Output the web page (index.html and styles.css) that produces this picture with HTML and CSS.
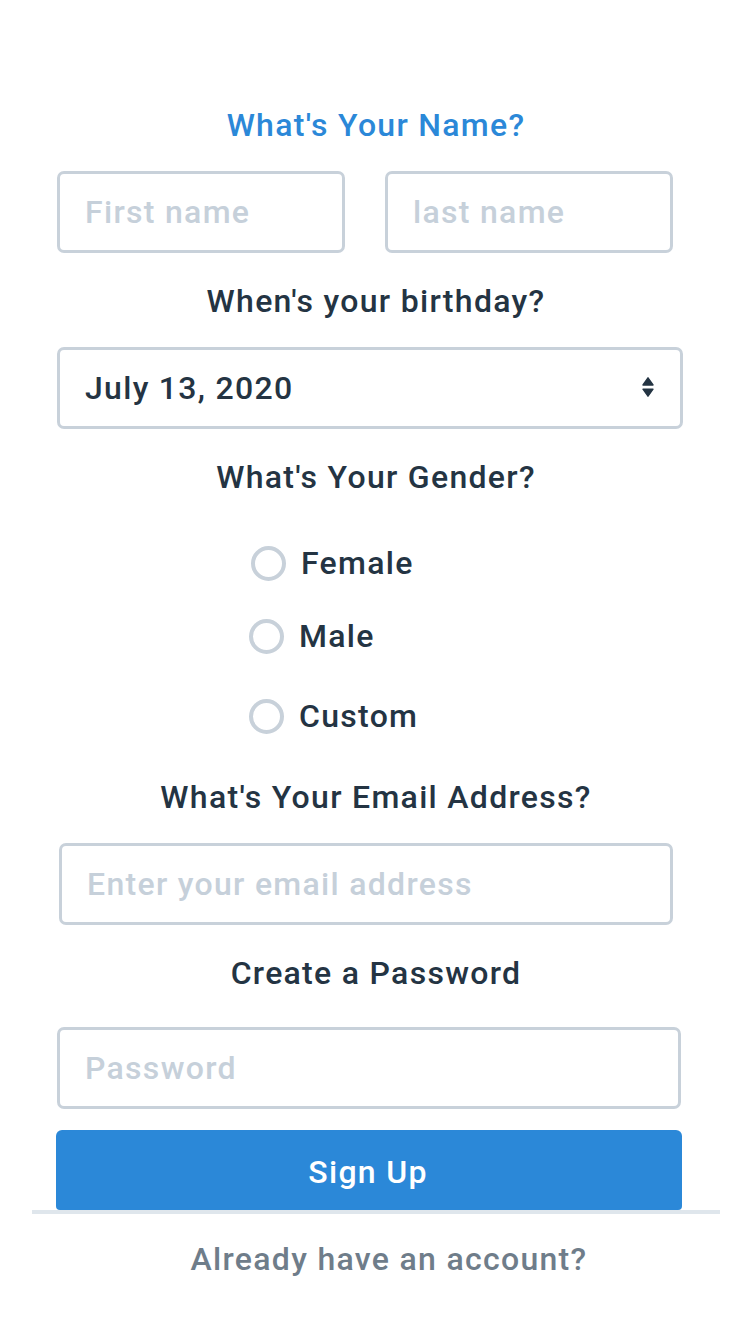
FILE: index.html
```html
<!DOCTYPE html>
<html lang="en">
<head>
<meta charset="utf-8">
<title>Sign Up</title>
<link rel="stylesheet" href="styles.css">
</head>
<body>
<form class="signup">
  <h2 class="label label-title">What's Your Name?</h2>
  <div class="name-row">
    <input class="field field-name" type="text" placeholder="First name">
    <input class="field field-name" type="text" placeholder="last name">
  </div>

  <h2 class="label label-birthday">When's your birthday?</h2>
  <div class="select-wrap">
    <select class="field select">
      <option>July 13, 2020</option>
    </select>
    <svg class="select-arrows" width="12" height="20" viewBox="0 0 12 20" aria-hidden="true">
      <path d="M6 0.8 L11 8 L1 8 Z" fill="#243443" stroke="#243443" stroke-width="1.4" stroke-linejoin="round"/>
      <path d="M1 12.2 L11 12.2 L6 19.2 Z" fill="#243443" stroke="#243443" stroke-width="1.4" stroke-linejoin="round"/>
    </svg>
  </div>

  <h2 class="label label-gender">What's Your Gender?</h2>
  <div class="radios">
    <label class="radio-row radio-female"><input class="radio" type="radio" name="g"><span>Female</span></label>
    <label class="radio-row radio-male"><input class="radio" type="radio" name="g"><span>Male</span></label>
    <label class="radio-row radio-custom"><input class="radio" type="radio" name="g"><span>Custom</span></label>
  </div>

  <h2 class="label label-email">What's Your Email Address?</h2>
  <input class="field field-email" type="email" placeholder="Enter your email address">

  <h2 class="label label-password">Create a Password</h2>
  <input class="field field-password" type="password" placeholder="Password">

  <button class="btn-signup" type="button">Sign Up</button>
  <div class="divider"></div>
  <p class="login-link">Already have an account?</p>
</form>
</body>
</html>
```

FILE: styles.css
```css
* { box-sizing: border-box; }

html, body {
  margin: 0;
  padding: 0;
  background: #ffffff;
}

body {
  width: 752px;
  min-height: 1336px;
  font-family: Roboto, "Liberation Sans", sans-serif;
  font-size: 32px;
  font-weight: 500;
  letter-spacing: 1.3px;
  color: #243443;
}

.signup {
  display: flex;
  flex-direction: column;
  padding-top: 105px;
}

.label {
  margin: 0;
  font-size: 32px;
  font-weight: 500;
  line-height: 40px;
  height: 40px;
  text-align: center;
  color: #243443;
}

.label-title { color: #2b88d8; }
.label-birthday { margin-top: 28px; }
.label-gender { margin-top: 28px; }
.label-email { margin-top: 41px; }
.label-password { margin-top: 28px; }

.field {
  display: block;
  height: 82px;
  border: 3px solid #c8d1da;
  border-radius: 7px;
  background: #fff;
  padding: 0 25px;
  font-family: inherit;
  font-size: 32px;
  font-weight: 500;
  letter-spacing: 1.3px;
  color: #243443;
  outline: none;
  margin: 0;
}

.field::placeholder { color: #c6d0da; opacity: 1; }

.name-row {
  display: flex;
  gap: 40px;
  margin: 26px 0 0 57px;
}

.field-name { width: 288px; }

.select-wrap {
  position: relative;
  margin: 26px 0 0 57px;
  width: 626px;
}

.select {
  width: 100%;
  -webkit-appearance: none;
  appearance: none;
}

.select-arrows {
  position: absolute;
  right: 29px;
  top: 30px;
  pointer-events: none;
}

.radios {
  display: flex;
  flex-direction: column;
  align-items: flex-start;
  padding-left: 249px;
}

.radio-row {
  display: flex;
  align-items: center;
  gap: 15px;
  height: 40px;
  line-height: 40px;
  font-size: 32px;
  color: #243443;
}

.radio-female { margin-top: 46px; margin-left: 2px; }
.radio-male { margin-top: 33px; }
.radio-custom { margin-top: 40px; }

.radio {
  -webkit-appearance: none;
  appearance: none;
  width: 35px;
  height: 35px;
  margin: 0;
  border: 4px solid #c8d1da;
  border-radius: 50%;
  background: #fff;
  flex: none;
}

.field-email {
  width: 614px;
  margin: 26px 0 0 59px;
}

.field-password {
  width: 624px;
  margin: 34px 0 0 57px;
}

.btn-signup {
  width: 626px;
  height: 80px;
  margin: 21px 0 0 56px;
  border: none;
  border-radius: 6px 6px 4px 4px;
  background: #2b88d8;
  color: #ffffff;
  font-family: inherit;
  font-size: 32px;
  font-weight: 500;
  letter-spacing: 1.3px;
  padding: 4px 0 0 0;
  text-indent: -2px;
}

.divider {
  width: 688px;
  height: 4px;
  margin-left: 32px;
  background: #dfe6ec;
}

.login-link {
  margin: 25px 0 0 0;
  height: 40px;
  line-height: 40px;
  text-align: center;
  font-size: 32px;
  color: #6f7d8a;
  padding-left: 26px;
}
```
